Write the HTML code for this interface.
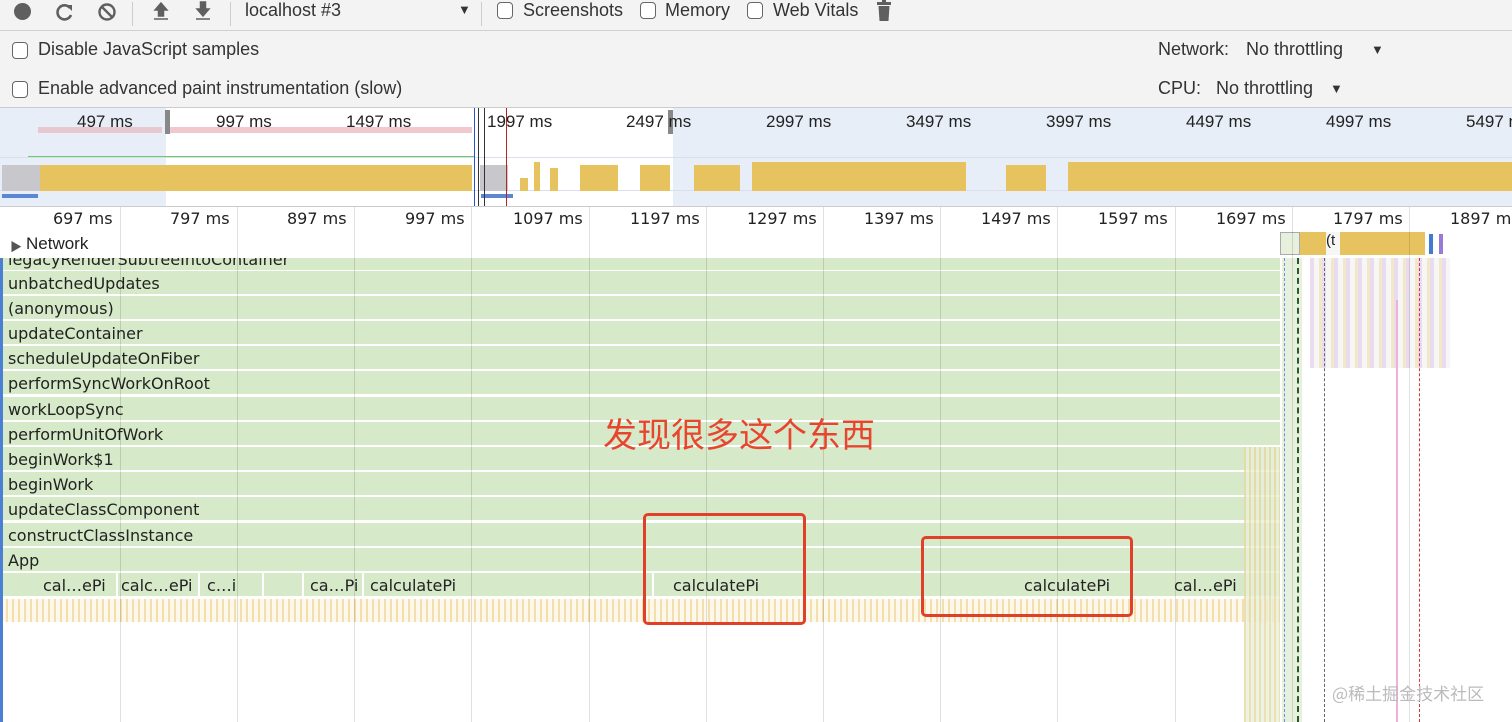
<!DOCTYPE html>
<html><head><meta charset="utf-8"><style>
*{margin:0;padding:0;box-sizing:border-box}
body{width:1512px;height:722px;overflow:hidden;position:relative;background:#fff;font-family:"Liberation Sans","Noto Sans CJK SC",sans-serif;color:#333}
.a{position:absolute}
.t{position:absolute;font-size:18px;color:#333;white-space:nowrap}
.cb{position:absolute;width:16px;height:17px;border:1.5px solid #666;border-radius:4px;background:#fff}
.row{position:absolute;left:0;width:1280px;height:23px;background:#d6e9c8}
.fl{position:absolute;left:8px;font-size:16px;color:#222;white-space:nowrap;font-family:"DejaVu Sans",sans-serif}
.g{position:absolute;top:207px;width:1px;height:515px;background:rgba(0,0,0,.12)}
.rl{position:absolute;top:209px;font-size:16px;color:#222;font-family:"DejaVu Sans",sans-serif;white-space:nowrap}
.ol{position:absolute;top:112px;font-size:17px;color:#222;white-space:nowrap}
</style></head><body>
<!-- toolbar -->
<div class="a" style="left:0;top:0;width:1512px;height:108px;background:#f3f3f3"></div>
<div class="a" style="left:0;top:30px;width:1512px;height:1px;background:#d0d0d0"></div>
<div class="a" style="left:14px;top:3px;width:17px;height:17px;border-radius:50%;background:#5f5f5f"></div>
<svg class="a" style="left:55px;top:2px" width="20" height="20" viewBox="0 0 20 20"><path d="M15 6A7 7 0 1 0 16 13" fill="none" stroke="#5f5f5f" stroke-width="2.6"/><path d="M11 3L17 3L17 9Z" fill="#5f5f5f"/></svg>
<svg class="a" style="left:97px;top:2px" width="20" height="20" viewBox="0 0 20 20"><circle cx="10" cy="10" r="7.5" fill="none" stroke="#5f5f5f" stroke-width="2.4"/><path d="M5 5L15 15" stroke="#5f5f5f" stroke-width="2.4"/></svg>
<div class="a" style="left:132px;top:2px;width:1px;height:24px;background:#ccc"></div>
<svg class="a" style="left:152px;top:1px" width="18" height="20" viewBox="0 0 18 20"><path d="M9 2L3 9H6.5V15H11.5V9H15Z M2 18H16" fill="#5f5f5f" stroke="#5f5f5f" stroke-width="1.5"/></svg>
<svg class="a" style="left:194px;top:1px" width="18" height="20" viewBox="0 0 18 20"><path d="M6.5 1H11.5V8H15L9 15L3 8H6.5Z M2 18H16" fill="#5f5f5f" stroke="#5f5f5f" stroke-width="1.5"/></svg>
<div class="a" style="left:230px;top:2px;width:1px;height:24px;background:#ccc"></div>
<div class="t" style="left:245px;top:0px">localhost #3</div>
<div class="t" style="left:458px;top:2px;font-size:13px">▼</div>
<div class="a" style="left:481px;top:2px;width:1px;height:24px;background:#ccc"></div>
<div class="cb" style="left:497px;top:2px"></div><div class="t" style="left:523px;top:0px">Screenshots</div>
<div class="cb" style="left:640px;top:2px"></div><div class="t" style="left:665px;top:0px">Memory</div>
<div class="cb" style="left:747px;top:2px"></div><div class="t" style="left:773px;top:0px">Web Vitals</div>
<svg class="a" style="left:876px;top:0" width="16" height="22" viewBox="0 0 16 22"><rect x="6" y="0" width="4" height="2" fill="#5f5f5f"/><rect x="1" y="2" width="14" height="3" fill="#5f5f5f"/><path d="M2.5 6H13.5L12.5 21H3.5Z" fill="#5f5f5f"/></svg>
<div class="cb" style="left:12px;top:42px"></div><div class="t" style="left:38px;top:39px">Disable JavaScript samples</div>
<div class="cb" style="left:12px;top:81px"></div><div class="t" style="left:38px;top:78px">Enable advanced paint instrumentation (slow)</div>
<div class="t" style="left:1158px;top:39px">Network:</div><div class="t" style="left:1246px;top:39px">No throttling</div><div class="t" style="left:1371px;top:42px;font-size:13px">▼</div>
<div class="t" style="left:1158px;top:78px">CPU:</div><div class="t" style="left:1216px;top:78px">No throttling</div><div class="t" style="left:1330px;top:81px;font-size:13px">▼</div>
<div class="a" style="left:0;top:107px;width:1512px;height:1px;background:#ccc"></div>
<!-- overview -->
<div class="a" style="left:0;top:108px;width:166px;height:98px;background:#e8eef8"></div>
<div class="a" style="left:673px;top:108px;width:839px;height:98px;background:#e8eef8"></div>
<div class="a" style="left:0;top:157px;width:1512px;height:1px;background:#dde"></div>
<div class="a" style="left:0;top:190px;width:1512px;height:1px;background:#dde"></div>
<div class="a" style="left:38px;top:127px;width:124px;height:6px;background:#e8c8cf"></div>
<div class="a" style="left:170px;top:127px;width:302px;height:6px;background:#f2c8cf"></div>
<div class="a" style="left:165px;top:110px;width:5px;height:24px;background:#888"></div>
<div class="a" style="left:668px;top:110px;width:5px;height:24px;background:#888"></div>
<div class="a" style="left:28px;top:156px;width:446px;height:1px;background:#6c6"></div>
<div class="a" style="left:2px;top:165px;width:470px;height:26px;background:#e6c35e"></div>
<div class="a" style="left:2px;top:165px;width:38px;height:26px;background:#c8c8cc"></div>
<div class="a" style="left:480px;top:165px;width:28px;height:26px;background:#c8c8cc"></div>
<div class="a" style="left:520px;top:178px;width:8px;height:13px;background:#e6c35e"></div>
<div class="a" style="left:534px;top:162px;width:6px;height:29px;background:#e6c35e"></div>
<div class="a" style="left:550px;top:168px;width:8px;height:23px;background:#e6c35e"></div>
<div class="a" style="left:580px;top:165px;width:38px;height:26px;background:#e6c35e"></div>
<div class="a" style="left:640px;top:165px;width:30px;height:26px;background:#e6c35e"></div>
<div class="a" style="left:694px;top:165px;width:46px;height:26px;background:#e6c35e"></div>
<div class="a" style="left:752px;top:162px;width:214px;height:29px;background:#e6c35e"></div>
<div class="a" style="left:1006px;top:165px;width:40px;height:26px;background:#e6c35e"></div>
<div class="a" style="left:1068px;top:162px;width:444px;height:29px;background:#e6c35e"></div>
<div class="a" style="left:2px;top:194px;width:36px;height:4px;background:#5b86d6"></div>
<div class="a" style="left:481px;top:194px;width:32px;height:4px;background:#5b86d6"></div>
<div class="a" style="left:474px;top:108px;width:1px;height:98px;background:#2255cc"></div>
<div class="a" style="left:478px;top:108px;width:1px;height:98px;background:#333"></div>
<div class="a" style="left:484px;top:108px;width:1px;height:98px;background:#333"></div>
<div class="a" style="left:506px;top:108px;width:1px;height:98px;background:#b22"></div>
<div class="ol" style="left:77px">497 ms</div><div class="ol" style="left:216px">997 ms</div><div class="ol" style="left:346px">1497 ms</div><div class="ol" style="left:487px">1997 ms</div><div class="ol" style="left:626px">2497 ms</div><div class="ol" style="left:766px">2997 ms</div><div class="ol" style="left:906px">3497 ms</div><div class="ol" style="left:1046px">3997 ms</div><div class="ol" style="left:1186px">4497 ms</div><div class="ol" style="left:1326px">4997 ms</div><div class="ol" style="left:1466px">5497 ms</div>
<div class="a" style="left:0;top:206px;width:1512px;height:1px;background:#ccc"></div>
<!-- flame rows -->
<div class="row" style="top:258px;height:12px"></div>
<div class="row" style="top:271px"></div><div class="row" style="top:296px"></div><div class="row" style="top:321px"></div><div class="row" style="top:346px"></div><div class="row" style="top:371px"></div><div class="row" style="top:397px"></div><div class="row" style="top:422px"></div><div class="row" style="top:447px"></div><div class="row" style="top:472px"></div><div class="row" style="top:497px"></div><div class="row" style="top:523px"></div><div class="row" style="top:548px"></div><div class="row" style="top:573px"></div>
<div class="a" style="left:0;top:599px;width:1280px;height:23px;background:repeating-linear-gradient(90deg,#f3dfae 0 2px,#fdf8ea 2px 6px)"></div>
<div class="a" style="left:1244px;top:447px;width:36px;height:275px;background:repeating-linear-gradient(90deg,#e8d8a0 0 2px,#e8f0dc 2px 5px);opacity:.8"></div>
<div class="a" style="left:1282px;top:258px;width:20px;height:464px;background:#e6f0dc"></div>
<div class="a" style="left:1310px;top:258px;width:140px;height:110px;background:repeating-linear-gradient(90deg,#eadcf0 0 4px,#f6f6f6 4px 9px,#f2e8c8 9px 12px)"></div>
<div class="a" style="left:1280px;top:232px;width:20px;height:23px;background:#e6f0dc;border:1px solid #aaa"></div>
<div class="a" style="left:1300px;top:232px;width:125px;height:23px;background:#e6c35e"></div>
<div class="a" style="left:1326px;top:232px;width:14px;height:23px;background:#f6f6f6;font-size:15px;color:#222">(t</div>
<div class="a" style="left:1429px;top:234px;width:4px;height:20px;background:#3f7ad8"></div>
<div class="a" style="left:1439px;top:234px;width:4px;height:20px;background:#9a7ad8"></div>
<div class="a" style="left:1284px;top:258px;width:0;height:464px;border-left:1px dashed #6a8fd8"></div>
<div class="a" style="left:1297px;top:258px;width:0;height:464px;border-left:2px dashed #2a5a2a"></div>
<div class="a" style="left:1324px;top:258px;width:0;height:464px;border-left:1px dashed #666"></div>
<div class="a" style="left:1419px;top:258px;width:0;height:464px;border-left:1px dashed #d33"></div>
<div class="a" style="left:1396px;top:300px;width:2px;height:422px;background:#f0b0d8"></div>
<!-- grid -->
<div class="g" style="left:120px"></div><div class="g" style="left:237px"></div><div class="g" style="left:354px"></div><div class="g" style="left:471px"></div><div class="g" style="left:589px"></div><div class="g" style="left:706px"></div><div class="g" style="left:823px"></div><div class="g" style="left:940px"></div><div class="g" style="left:1057px"></div><div class="g" style="left:1175px"></div><div class="g" style="left:1292px"></div><div class="g" style="left:1409px"></div>
<div class="rl" style="left:53px">697 ms</div><div class="rl" style="left:170px">797 ms</div><div class="rl" style="left:287px">897 ms</div><div class="rl" style="left:405px">997 ms</div><div class="rl" style="left:513px">1097 ms</div><div class="rl" style="left:630px">1197 ms</div><div class="rl" style="left:747px">1297 ms</div><div class="rl" style="left:864px">1397 ms</div><div class="rl" style="left:981px">1497 ms</div><div class="rl" style="left:1098px">1597 ms</div><div class="rl" style="left:1216px">1697 ms</div><div class="rl" style="left:1333px">1797 ms</div><div class="rl" style="left:1450px">1897 ms</div>
<div class="a" style="left:10px;top:238px;font-size:12px;color:#555">▶</div>
<div class="a" style="left:26px;top:234px;font-size:17px;color:#222">Network</div>
<div class="a" style="left:0;top:258px;width:3px;height:464px;background:#4a7fd4"></div>
<div class="fl" style="top:250px;clip-path:inset(8px 0 0 0)">legacyRenderSubtreeIntoContainer</div>
<div class="fl" style="top:274px">unbatchedUpdates</div>
<div class="fl" style="top:299px">(anonymous)</div>
<div class="fl" style="top:324px">updateContainer</div>
<div class="fl" style="top:349px">scheduleUpdateOnFiber</div>
<div class="fl" style="top:374px">performSyncWorkOnRoot</div>
<div class="fl" style="top:400px">workLoopSync</div>
<div class="fl" style="top:425px">performUnitOfWork</div>
<div class="fl" style="top:450px">beginWork$1</div>
<div class="fl" style="top:475px">beginWork</div>
<div class="fl" style="top:500px">updateClassComponent</div>
<div class="fl" style="top:526px">constructClassInstance</div>
<div class="fl" style="top:551px">App</div>
<div class="fl" style="top:576px;left:43px">cal…ePi</div>
<div class="fl" style="top:576px;left:121px">calc…ePi</div>
<div class="fl" style="top:576px;left:207px">c…i</div>
<div class="fl" style="top:576px;left:310px">ca…Pi</div>
<div class="fl" style="top:576px;left:370px">calculatePi</div>
<div class="fl" style="top:576px;left:673px">calculatePi</div>
<div class="fl" style="top:576px;left:1024px">calculatePi</div>
<div class="fl" style="top:576px;left:1174px">cal…ePi</div>
<div class="a" style="left:116px;top:573px;width:2px;height:25px;background:#fff"></div>
<div class="a" style="left:198px;top:573px;width:2px;height:25px;background:#fff"></div>
<div class="a" style="left:262px;top:573px;width:2px;height:25px;background:#fff"></div>
<div class="a" style="left:302px;top:573px;width:2px;height:25px;background:#fff"></div>
<div class="a" style="left:362px;top:573px;width:2px;height:25px;background:#fff"></div>
<div class="a" style="left:652px;top:573px;width:2px;height:25px;background:#fff"></div>
<!-- annotations -->
<div class="a" style="left:603px;top:408px;font-size:34px;color:#e8452f;font-family:'Noto Sans CJK SC',sans-serif;white-space:nowrap">发现很多这个东西</div>
<div class="a" style="left:643px;top:513px;width:163px;height:112px;border:3px solid #e0402a;border-radius:5px"></div>
<div class="a" style="left:921px;top:536px;width:212px;height:81px;border:3px solid #e0402a;border-radius:5px"></div>
<div class="a" style="left:1332px;top:680px;font-size:17px;color:#bbb;font-family:'Noto Sans CJK SC',sans-serif">@稀土掘金技术社区</div>
</body></html>
